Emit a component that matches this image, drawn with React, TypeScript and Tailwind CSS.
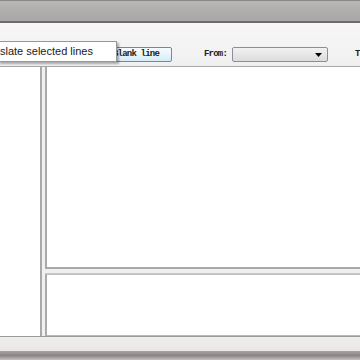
export default function App() {
  return (
    <div className="w-[360px] h-[360px] overflow-hidden flex flex-col bg-[#f0f0f0] font-['Liberation_Sans',sans-serif] relative">
      {/* title bar */}
      <div className="h-[21px] shrink-0 border-t border-[#8a8686] bg-gradient-to-b from-[#b9b6b6] via-[#b0adad] to-[#aaa7a7]" />
      <div className="h-[2px] shrink-0 bg-[#6e6c6c]" />

      {/* toolbar */}
      <div className="h-[44px] shrink-0 flex items-start bg-gradient-to-b from-[#f7f7f7] to-[#f0f0f0] border-b border-[#a8a8a8] pt-[24px] overflow-hidden">
        <div className="ml-[100px] w-[72px] h-[15px] shrink-0 border border-[#4f94c6] rounded-[2px] bg-gradient-to-b from-[#f5fbfe] via-[#e9f4fb] to-[#d6eaf7] flex items-center justify-end pr-[12px] font-['Liberation_Mono',monospace] text-[9px] font-bold text-[#222] leading-none tracking-[-0.8px] whitespace-nowrap overflow-hidden">
          Blank line
        </div>
        <span className="ml-[32px] mt-[3px] shrink-0 font-['Liberation_Mono',monospace] text-[9px] font-bold text-[#222] leading-none tracking-[-0.8px]">
          From:
        </span>
        <div className="ml-[5px] w-[96px] h-[15px] shrink-0 border border-[#8e8f8f] rounded-[2px] bg-gradient-to-b from-[#f2f2f2] to-[#dcdcdc] flex items-center justify-end pr-[5px]">
          <svg width="7" height="4" viewBox="0 0 7 4">
            <path d="M0 0h7L3.5 4z" fill="#000" />
          </svg>
        </div>
        <span className="ml-[27px] mt-[3px] shrink-0 font-['Liberation_Mono',monospace] text-[9px] font-bold text-[#222] leading-none">
          T
        </span>
      </div>

      {/* main area */}
      <div className="flex h-[269px] shrink-0">
        <div className="w-[42px] bg-white border-r-2 border-[#a9a9a9]" />
        <div className="w-[3px] bg-[#f0f0f0]" />
        <div className="flex-1 flex flex-col">
          <div className="h-[202px] bg-white border-l-2 border-b-2 border-[#a9a9a9]" />
          <div className="h-[5px] bg-[#efefef] border-b border-[#c8c8c8]" />
          <div className="flex-1 bg-white border-l-2 border-[#a9a9a9] border-b border-b-[#b8b8b8] border-t border-t-[#c0c0c0]" />
        </div>
      </div>

      {/* status bar */}
      <div className="h-[15px] shrink-0 border-t border-[#9a9a9a] bg-gradient-to-b from-[#eeeeee] to-[#ebe6e6]" />
      <div className="flex-1 bg-gradient-to-b from-[#a9a3a3] via-[#8c8585] to-[#c7c1c1]" />

      {/* context menu */}
      <div className="absolute left-[-2px] top-[41px] w-[119px] h-[21px] bg-white border border-[#979797] shadow-[2px_2px_2px_rgba(0,0,0,0.3)] flex items-center">
        <span className="ml-[1px] text-[11px] text-[#1a1a1a] leading-none whitespace-nowrap">
          slate selected lines
        </span>
      </div>
    </div>
  );
}
